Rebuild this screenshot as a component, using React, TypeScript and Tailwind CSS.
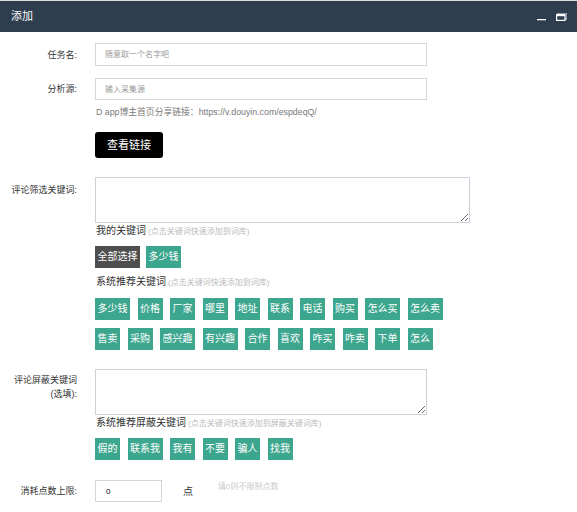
import React from 'react';

const ROW_ONE = ['多少钱', '价格', '厂家', '哪里', '地址', '联系', '电话', '购买', '怎么买', '怎么卖'];
const ROW_TWO = ['售卖', '采购', '感兴趣', '有兴趣', '合作', '喜欢', '咋买', '咋卖', '下单', '怎么'];
const BLOCKED = ['假的', '联系我', '我有', '不要', '骗人', '找我'];

const Tag = ({ text, dark }: { text: string; dark?: boolean }) => (
  <span
    className={`h-[22px] px-[2.5px] flex items-center text-[10px] text-white leading-none ${dark ? 'bg-[#4f4f4f]' : 'bg-[#3ca68e]'}`}
  >
    {text}
  </span>
);

const Label = ({ children, pt }: { children: React.ReactNode; pt?: string }) => (
  <div className={`w-[77px] shrink-0 text-right text-[9px] leading-[14px] text-[#333] ${pt ?? ''}`}>
    {children}
  </div>
);

const Heading = ({ title, hint, mt }: { title: string; hint: string; mt: string }) => (
  <div className={`ml-[96px] h-[14px] flex items-baseline text-[10px] leading-[14px] ${mt}`}>
    <span className="text-[#333]">{title}</span>
    <span className="text-[8px] leading-[14px] text-[#bbb] ml-[2px]">{hint}</span>
  </div>
);

export default function App() {
  return (
    <div className="w-[577px] h-[512px] overflow-hidden bg-white font-['Liberation_Sans','Noto_Sans_CJK_SC',sans-serif]">
      <div className="h-[32px] border-t border-[#d9dde2] bg-[#2e3e4f] flex items-center justify-between pl-[11px] pr-[10px]">
        <span className="text-[11px] text-white">添加</span>
        <div className="flex items-center gap-[10px]">
          <svg width="9" height="8" viewBox="0 0 9 8">
            <rect x="0" y="6" width="9" height="1.3" fill="#fff" />
          </svg>
          <svg width="11" height="8" viewBox="0 0 11 8">
            <rect x="2" y="0" width="9" height="6" fill="none" stroke="#dfe3e8" strokeWidth="1" />
            <rect x="0.6" y="1.6" width="8.4" height="5.8" fill="#2e3e4f" stroke="#fff" strokeWidth="1.2" />
            <rect x="0.6" y="1.6" width="8.4" height="1.6" fill="#fff" />
          </svg>
        </div>
      </div>

      <div className="flex items-center mt-[11px]">
        <Label>任务名:</Label>
        <input
          className="ml-[18px] w-[332px] h-[23px] border border-[#d2d6de] px-[9px] text-[8px] outline-none placeholder:text-[#999]"
          placeholder="随意取一个名字吧"
        />
      </div>

      <div className="flex items-center mt-[12px]">
        <Label>分析源:</Label>
        <input
          className="ml-[18px] w-[332px] h-[22px] border border-[#d2d6de] px-[9px] text-[8px] outline-none placeholder:text-[#999]"
          placeholder="输入采集源"
        />
      </div>

      <div className="ml-[96px] mt-[7px] h-[10px] text-[8.8px] leading-[10px] text-[#777]">
        D app博主首页分享链接：https://v.douyin.com/espdeqQ/
      </div>

      <div className="ml-[95px] mt-[15px] h-[26px]">
        <button className="w-[68px] h-[26px] rounded-[3px] bg-black text-white text-[11px]">查看链接</button>
      </div>

      <div className="flex items-start mt-[19px]">
        <Label pt="pt-[6px]">评论筛选关键词:</Label>
        <textarea className="ml-[18px] w-[375px] h-[46px] border border-[#d0d0db] outline-none block" />
      </div>
      <Heading title="我的关键词" hint="(点击关键词快速添加到词库)" mt="mt-[1px]" />
      <div className="ml-[95px] mt-[8px] flex gap-[6px]">
        <Tag text="全部选择" dark />
        <Tag text="多少钱" />
      </div>

      <Heading title="系统推荐关键词" hint="(点击关键词快速添加到词库)" mt="mt-[7px]" />
      <div className="ml-[95px] mt-[9px] flex gap-[7.5px]">
        {ROW_ONE.map((t) => (
          <Tag key={t} text={t} />
        ))}
      </div>
      <div className="ml-[95px] mt-[8px] flex gap-[7.5px]">
        {ROW_TWO.map((t) => (
          <Tag key={t} text={t} />
        ))}
      </div>

      <div className="flex items-start mt-[19px]">
        <Label pt="pt-[4px]">
          评论屏蔽关键词
          <br />
          (选填):
        </Label>
        <textarea className="ml-[18px] w-[332px] h-[46px] border border-[#d0d0db] outline-none block" />
      </div>
      <Heading title="系统推荐屏蔽关键词" hint="(点击关键词快速添加到屏蔽关键词库)" mt="mt-[1px]" />
      <div className="ml-[95px] mt-[8px] flex gap-[7.5px]">
        {BLOCKED.map((t) => (
          <Tag key={t} text={t} />
        ))}
      </div>

      <div className="flex items-center mt-[20px]">
        <Label>消耗点数上限:</Label>
        <input
          className="ml-[18px] w-[67px] h-[22px] border border-[#d2d6de] px-[10px] text-[8px] outline-none"
          defaultValue="0"
        />
        <span className="ml-[21px] text-[10px] text-[#333]">点</span>
        <span className="ml-[25px] self-start mt-[2px] text-[8px] leading-[10px] text-[#ccc]">填0则不限制点数</span>
      </div>
    </div>
  );
}
